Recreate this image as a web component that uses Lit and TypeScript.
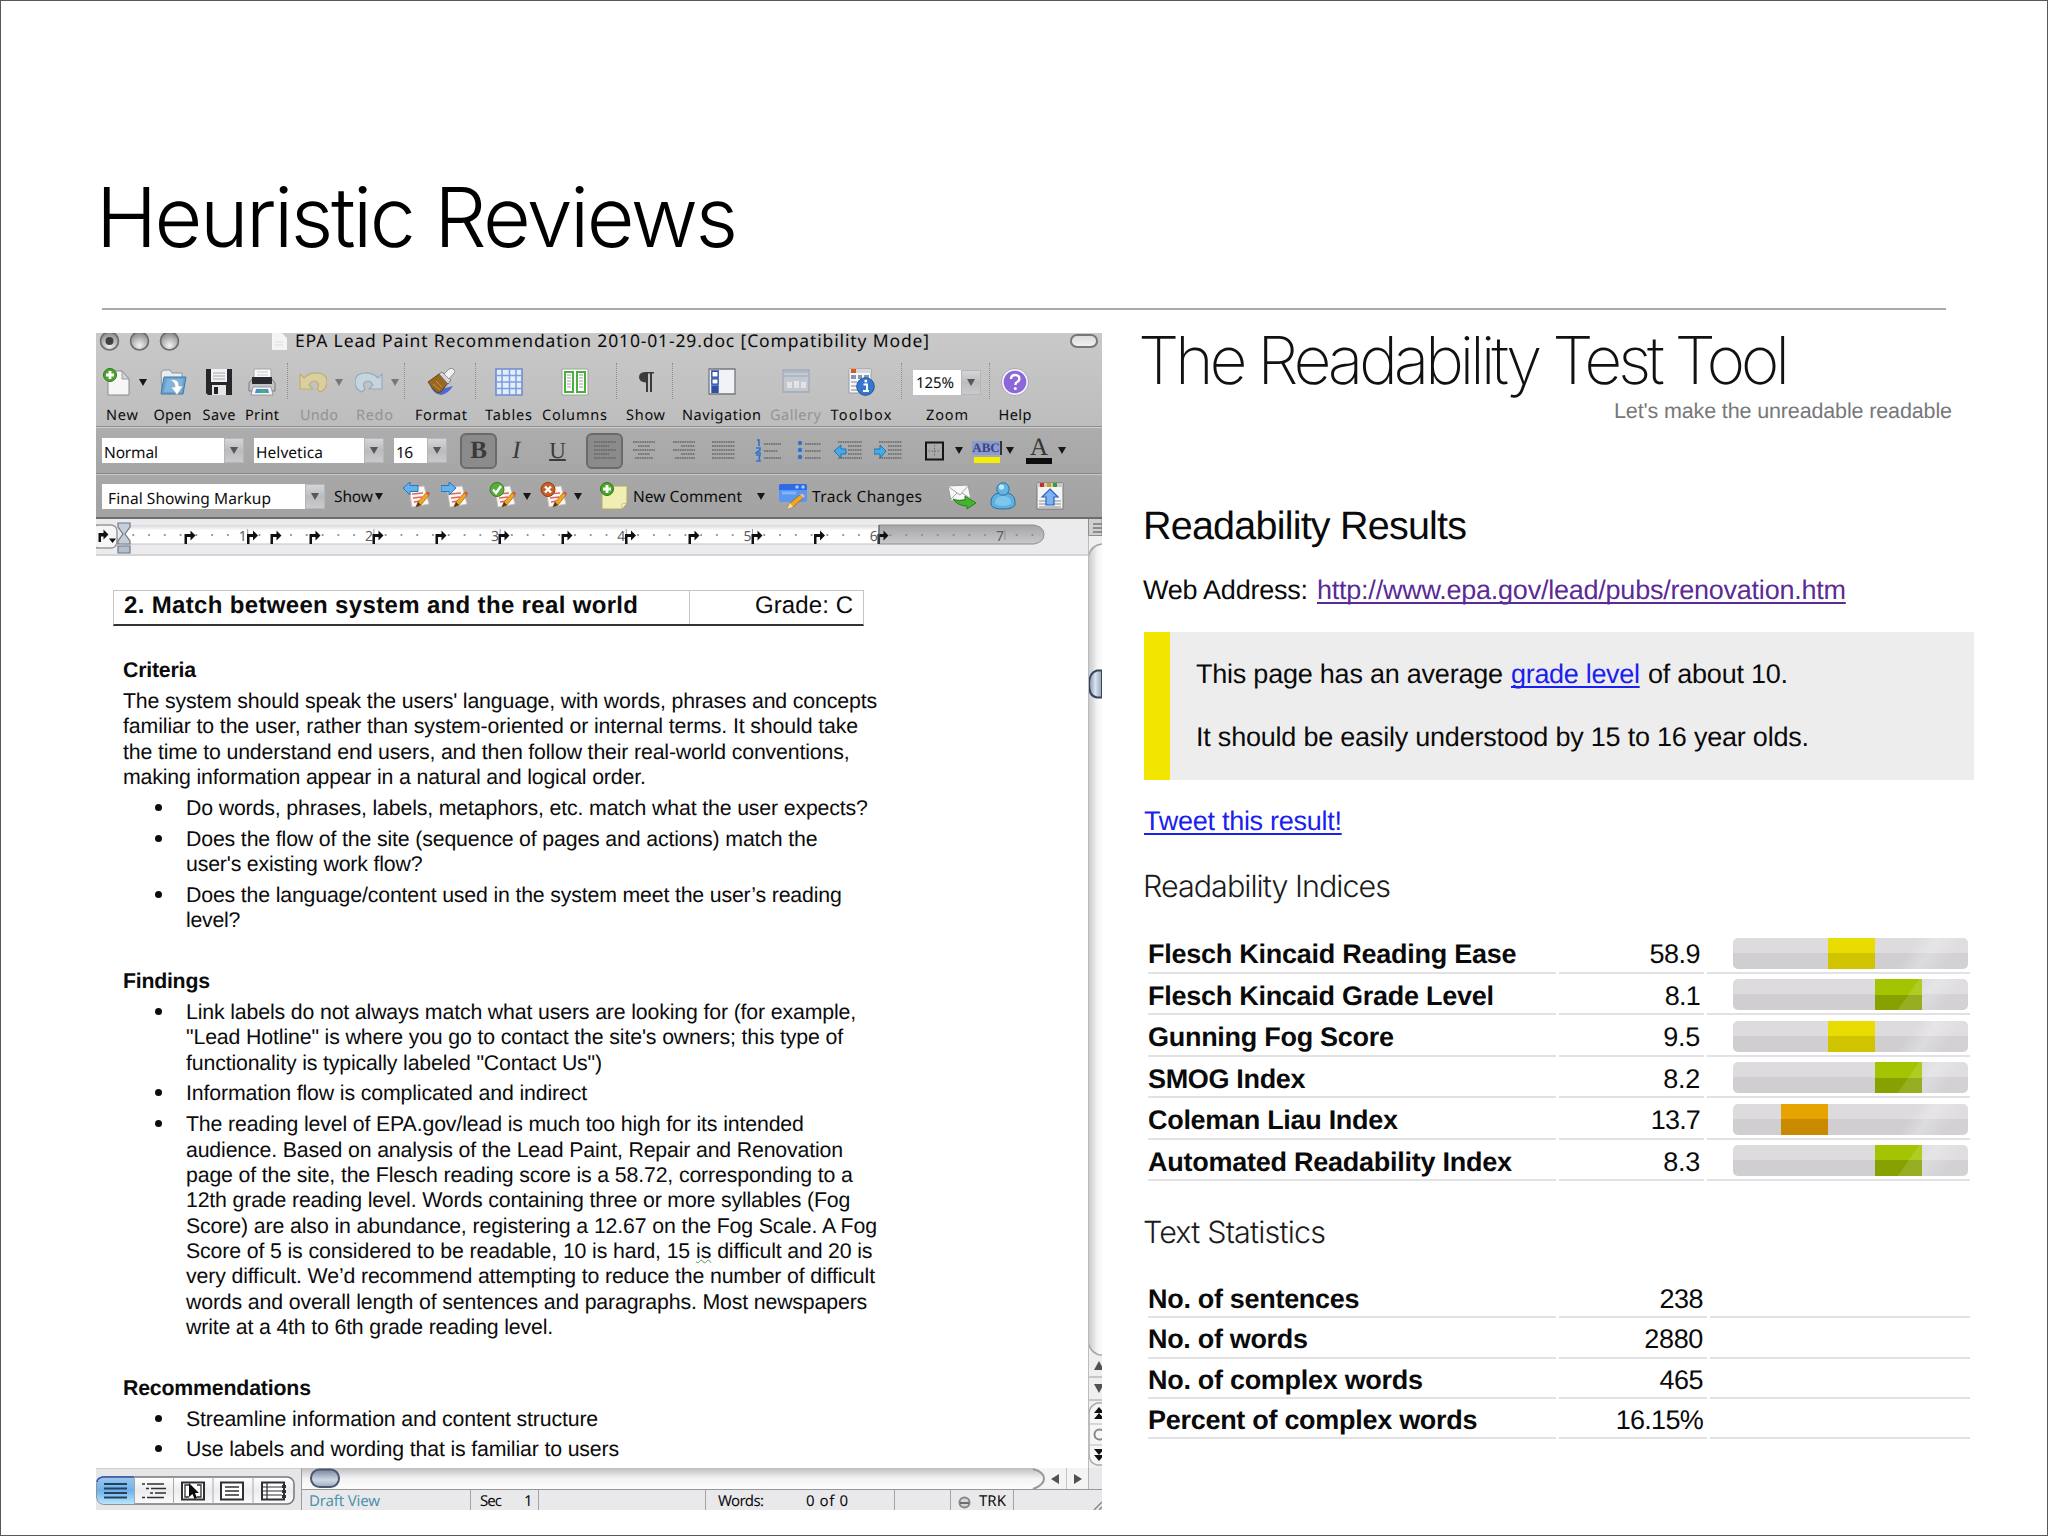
import { LitElement, html, css, svg, nothing, TemplateResult } from "lit";
import { customElement, property } from "lit/decorators.js";
import { classMap } from "lit/directives/class-map.js";

/** One line of text tracked out or in so that it fills a measure. */
@customElement("fit-text")
class FitText extends LitElement {
  @property() text = "";
  @property({ type: Number }) w = 0;
  static styles = css`
    :host { display: inline-block; white-space: pre; }
    .t { display: inline-block; text-decoration: inherit; }
  `;
  render() {
    return html`<span class="t">${this.text}</span>`;
  }
  firstUpdated() {
    const el = this.renderRoot.querySelector(".t") as HTMLElement;
    const natural = el.getBoundingClientRect().width;
    const n = this.text.length;
    if (n > 1 && this.w) {
      el.style.letterSpacing = `${(this.w - natural) / (n - 1)}px`;
      this.style.width = `${this.w}px`;
    }
  }
}

const fit = (text: string, w: number, cls = "") =>
  html`<fit-text class=${cls} .text=${text} .w=${w}></fit-text>`;

const caret = (cls = "") => html`<svg class="caret ${cls}" width="8" height="7" viewBox="0 0 8 7"><path d="M0 0h8L4 7z" fill="currentColor"/></svg>`;

const pencil = svg`<path d="M13 25l2-5 8-9 3 2-8 10z" fill="#f2a51e" stroke="#9c6410" stroke-width=".7"/><path d="M23 11l1.500-1.500q2 .300 2.500 2L26 13z" fill="#d9534a"/><path d="M13 25l2-5 3 3z" fill="#4a3a28"/>`;
const sheet = svg`<path d="M6 6l15-2 5 18-17 3z" fill="#fbf7f4" stroke="#c9c2bd" stroke-width=".8"/><path d="M9 12l11-1M10 16l9-1M11 20l6-1" stroke="#e2655d" stroke-width="1.600"/>`;
const plus = svg`<circle cx="7" cy="7" r="6.500" fill="#4aa52c" stroke="#2d7a17"/><path d="M7 3v8M3 7h8" stroke="#fff" stroke-width="2.800"/>`;

const icons: Record<string, TemplateResult> = {
  new: svg`<path d="M5 3h14l7 8v16H5z" fill="#f6f6f7" stroke="#8b8b8f"/><path d="M19 3v8h7z" fill="#d5d5d8" stroke="#8b8b8f" stroke-width=".8"/>${plus}`,
  open: svg`<path d="M2 4l3-2h6l2 3h10v20H3z" fill="#e9ecf0" stroke="#8e959e"/><path d="M5 9h22l-3 17H2z" fill="#6aa2cf" stroke="#3f78a6"/><path d="M8 11h16l-2 13H5z" fill="#8fc0e4" opacity=".6"/><path d="M11 12q9-2 9 6h4l-6 9-6-8h4q0-5-5-7z" fill="#fff" stroke="#8fa7b8" stroke-width=".7"/>`,
  save: svg`<path d="M1 1h26v26H3l-2-2z" fill="#26272b"/><path d="M6 1h16v13H6z" fill="#f1f1f3"/><path d="M8 5h12M8 8h12M8 11h12" stroke="#a5a5aa" stroke-width="1.200"/><path d="M7 17h14v10H7z" fill="#e4e5e7"/><path d="M9 19h4v7H9z" fill="#222"/>`,
  print: svg`<path d="M6 1h17v12H6z" fill="#fafafa" stroke="#a6a6a9"/><path d="M9 4h11M9 7h11" stroke="#c7c7ca"/><path d="M1 15l4-5h18l4 5v8H1z" fill="#c3c4c7" stroke="#77787b"/><path d="M4 9h20v7H4z" fill="#2a2b2e"/><path d="M5 19h18l2 8H3z" fill="#f4f4f4" stroke="#8b8b8f" stroke-width=".8"/><path d="M8 21h12l1 4H7z" fill="#3f94cc"/><path d="M14 21l6 4h-8z" fill="#4caf73"/>`,
  undo: svg`<path d="M1 6v15h13l-4-4q3-6 8-3 3 3 0 7l3 3q7-3 7-10 0-8-9-9-8-1-14 5z" fill="#dccf9f" stroke="#c0ab70" stroke-width="1.100"/>`,
  redo: svg`<path d="M27 6v15H14l4-4q-3-6-8-3-3 3 0 7l-3 3q-7-3-7-10 0-8 9-9 8-1 14 5z" fill="#c6d4de" stroke="#94a9bc" stroke-width="1.100"/>`,
  format: svg`<path d="M3 17q3 9 11 10 7-1 12-9l-8 2z" fill="#4d69dc"/><path d="M1 14l11-8 9 9-7 9q-4 2-7-2z" fill="#99671f" stroke="#5d4113" stroke-width=".9"/><path d="M6 16l7 6M9 13l6 6" stroke="#c69443"/><path d="M12 6l3-2 9 8-3 4z" fill="#d8d8db" stroke="#64646a" stroke-width=".8"/><path d="M17 6l5-5q5-2 6 3l-6 7z" fill="#f1f1f3" stroke="#85858b" stroke-width=".9"/>`,
  tables: svg`<path d="M1 1h26v26H1z" fill="#e3edfb" stroke="#6d8dd0" stroke-width="1.600"/><path d="M7 1v26M14.500 1v26M21 1v26M1 7.500h26M1 14h26M1 20.500h26" stroke="#7e9fdd" stroke-width="1.500"/>`,
  columns: svg`<path d="M1 1h26v26H1z" fill="#f8faf8" stroke="#9ea69e"/><path d="M4 4h8v20H4zM16 4h8v20h-8z" fill="#fff" stroke="#4cae3e" stroke-width="2"/><path d="M6 7h4M6 10h4M6 13h4M6 16h4M6 19h4M18 7h4M18 10h4M18 13h4M18 16h4M18 19h4" stroke="#9c9c9c"/>`,
  pilcrow: svg`<path d="M13 4h9v1.600h-2V24h-2V5.600h-2V24h-2V14.500q-7-.300-7-5.300T13 4z" fill="#3b3b3d"/>`,
  nav: svg`<path d="M1 1h26v25H1z" fill="#f1f2f5" stroke="#75777e" stroke-width="1.300"/><path d="M3 2h8v23H3z" fill="#5f7cc4"/><path d="M4 3.500h6v5.500H4zM4 11h6v5H4z" fill="#fff" stroke="#2d4c98"/><path d="M4 18h6v7H4z" fill="#2f509e"/>`,
  gallery: svg`<g opacity=".55"><path d="M1 2h26v22H1z" fill="#c5cedb" stroke="#8896ae" stroke-width="1.300"/><path d="M2 4h24M2 8h24" stroke="#93a5c5" stroke-width="1.500"/><path d="M5 14h5v6H5zM12 13h5v7h-5zM19 14h5v6h-5z" fill="#fff"/></g>`,
  toolbox: svg`<path d="M2 1h22v24H2z" fill="#f7f7f7" stroke="#9c9ca0"/><path d="M2 1h22v4H2z" fill="#d5d7dc"/><path d="M4 1h5v4H4z" fill="#dd5717"/><path d="M4 7h5v4H4zM11 7h4v4h-4zM17 7h5v4h-5z" fill="#8296ba"/><path d="M4 14h6M4 18h6M4 22h6" stroke="#7d8aa3"/><circle cx="18.500" cy="18.500" r="8.800" fill="#3577cc" stroke="#1f529c"/><path d="M16.500 16.500h3.500v6.500M16 23h6" stroke="#fff" stroke-width="2" fill="none"/><circle cx="18.800" cy="13" r="1.500" fill="#fff"/>`,
  help: svg`<circle cx="14" cy="14" r="12.500" fill="#8c67da" stroke="#f4f1fb" stroke-width="2.400"/><circle cx="14" cy="14" r="13.600" fill="none" stroke="#8c8c92" stroke-width=".7"/><path d="M10 11q0-4 4.200-4t4.200 3.500q0 2.300-2.400 3.500-1.600.8-1.600 3" fill="none" stroke="#fff" stroke-width="2.300"/><circle cx="14.300" cy="20.600" r="1.500" fill="#fff"/>`,
  alignL: svg`<path d="M3 5h22M3 9h15M3 13h22M3 17h15M3 21h22" class="ln"/>`,
  alignC: svg`<path d="M3 5h22M8 9h12M3 13h22M8 17h12M5 21h18" class="ln"/>`,
  alignR: svg`<path d="M3 5h22M11 9h14M3 13h22M11 17h14M5 21h20" class="ln"/>`,
  alignJ: svg`<path d="M3 5h23M3 9h23M3 13h23M3 17h23M3 21h23" class="ln"/>`,
  numbered: svg`<path d="M9 7h17M9 14h14M9 21h17" class="ln"/><path d="M2 3h2v6M1 11h4v2l-4 3h5M1 18h4l-1 3 1 3H1" stroke="#2f74cf" stroke-width="1.600" fill="none"/>`,
  bulleted: svg`<path d="M9 7h16M9 14h16M9 21h16" class="ln"/><circle cx="4" cy="6" r="2.200" fill="#2f74cf"/><circle cx="4" cy="13" r="2.200" fill="#2f74cf"/><circle cx="4" cy="20" r="2.200" fill="#2f74cf"/>`,
  outdent: svg`<path d="M4 5h24M14 9h14M14 13h14M14 17h14M4 21h24" class="ln"/><path d="M0 14l7-6v4h5v5H7v4z" fill="#45abe8" stroke="#176fae" stroke-width=".9"/>`,
  indent: svg`<path d="M5 5h23M14 9h14M14 13h14M14 17h14M5 21h23" class="ln"/><path d="M12 14L6 8v4H0v5h6v4z" fill="#45abe8" stroke="#176fae" stroke-width=".9"/>`,
  border: svg`<path d="M6 5.500h17v17H6z" fill="none" stroke="#151515" stroke-width="2"/><path d="M14.500 8v12M8.500 14h12" stroke="#6c6c6e" stroke-dasharray="1.500 1.500"/>`,
  prev: svg`${sheet}${pencil}<path d="M0 6l7-6v3.500h8v6H7V13z" fill="#62b3ee" stroke="#2a76b8"/>`,
  next: svg`${sheet}${pencil}<path d="M15 6L8 0v3.500H0v6h8V13z" fill="#62b3ee" stroke="#2a76b8"/>`,
  accept: svg`${sheet}${pencil}<circle cx="8" cy="7.500" r="7" fill="#59ad3a" stroke="#35801c"/><path d="M4 7.500l3 3.500 5-7" fill="none" stroke="#fff" stroke-width="2.400"/>`,
  reject: svg`${sheet}${pencil}<circle cx="8" cy="7.500" r="7" fill="#c8602b" stroke="#8e3c13"/><path d="M5 4.500l6 6M11 4.500l-6 6" stroke="#fff" stroke-width="2.400"/>`,
  note: svg`<path d="M2 4h25v17l-5 6H2z" fill="#f1eeb4" stroke="#b0aa6a"/><path d="M22 27v-5l5-1z" fill="#fbfae0" stroke="#b0aa6a" stroke-width=".7"/>${plus}`,
  track: svg`<rect x="0" y="2" width="28" height="18" rx="2.500" fill="#5a97f0"/><path d="M0 8V4q0-2 2-2h24q2 0 2 2v4z" fill="#2f6be6"/><circle cx="18" cy="5" r="1.700" fill="#a7ccff"/><circle cx="24" cy="5" r="1.700" fill="#a7ccff"/><path d="M3 11h14" stroke="#83b4f7" stroke-width="3"/><path d="M8 27l3-6 10-8 3 3-10 9z" fill="#f2a51e" stroke="#9c6410" stroke-width=".7"/><path d="M21 13l2-1.500 3 2.500-2 2z" fill="#e8b9ae"/><path d="M8 27l3-6 3 4z" fill="#f3deb4"/>`,
  mail: svg`<path d="M0 4l20-1 3 14-20 2z" fill="#f7f7f8" stroke="#9a9a9e"/><path d="M1 5l11 8 8-9M2 18l7-7M22 16l-8-5" fill="none" stroke="#a5a5aa"/><path d="M5 17q7 3 12 1v-4l11 7-9 6v-3q-9 0-14-7z" fill="#42b52c" stroke="#207a12" stroke-width=".9"/>`,
  person: svg`<path d="M2 23q-1-11 8-12h8q9 1 8 12-2 4-12 4T2 23z" fill="#5eb0df" stroke="#27719f"/><path d="M6 22q0-8 8-8t8 8q-8 4-16 0z" fill="#8dd0f2" opacity=".7"/><circle cx="14" cy="7" r="6.200" fill="#63b5e4" stroke="#27719f"/><circle cx="12.500" cy="5" r="2.600" fill="#c4e8fb"/>`,
  upload: svg`<path d="M1 1h26v26H1z" fill="#f4f4f5" stroke="#77777b"/><path d="M1 1h26v4H1z" fill="#c8c8cc"/><path d="M4 1h4v4H4z" fill="#c63127"/><path d="M11 1h4v4h-4z" fill="#d69a1c"/><path d="M17 1h4v4h-4z" fill="#3d9b35"/><path d="M3 19h22M3 22h22M3 25h22" stroke="#8c8c90"/><path d="M14 7l8 8h-4v8h-8v-8H6z" fill="#7db2f5" stroke="#2f63bb" stroke-width="1.200"/>`,
};

const icon = (name: string, cls = "") =>
  html`<svg class="ic ${cls}" width="28" height="28" viewBox="0 0 28 28">${icons[name]}</svg>`;

type Tool = { icon?: string; label?: string; w?: number; off?: boolean; arrow?: boolean; zoom?: boolean };
const tools: Tool[] = [
  { icon: "new", label: "New", w: 32, arrow: true },
  { icon: "open", label: "Open", w: 38 },
  { icon: "save", label: "Save", w: 33 },
  { icon: "print", label: "Print", w: 34 },
  {},
  { icon: "undo", label: "Undo", w: 38, off: true, arrow: true },
  { icon: "redo", label: "Redo", w: 37, off: true, arrow: true },
  {},
  { icon: "format", label: "Format", w: 52 },
  {},
  { icon: "tables", label: "Tables", w: 47 },
  { icon: "columns", label: "Columns", w: 65 },
  {},
  { icon: "pilcrow", label: "Show", w: 39 },
  {},
  { icon: "nav", label: "Navigation", w: 79 },
  { icon: "gallery", label: "Gallery", w: 51, off: true },
  { icon: "toolbox", label: "Toolbox", w: 61 },
  {},
  { zoom: true, label: "Zoom", w: 42 },
  {},
  { icon: "help", label: "Help", w: 33 },
];

const combo = (text: string, w: number, cls: string) => html`
  <div class="combo ${cls}"><span class="val">${fit(text, w)}</span><span class="drop">${caret()}</span></div>`;

const tabMark = (x: number) => svg`<path transform="translate(${x} 0)" d="M-3.500 31.500v-10h6v-3.500l5 5-5 5v-3.500h-3.500v7z" fill="#101012"/>`;

@customElement("word-window")
class WordWindow extends LitElement {
  static styles = css`
    :host { display: flex; flex-direction: column; width: 1006px; height: 1177px; color: #0c0c0c;
      font-family: "Noto Sans", "Liberation Sans", sans-serif; background: #fff; }
    * { box-sizing: border-box; }
    svg { display: block; flex: none; }
    .chrome { background: linear-gradient(#c9c9c9, #bdbdbd 93px); height: 93px; }
    .title { display: grid; grid-template-columns: 176px 23px 635px 138px 1fr; height: 26px; align-items: start; }
    .lights { display: flex; gap: 9px; padding-left: 3px; }
    .name { font-size: 17.500px; line-height: 16px; }
    .pill { width: 28px; height: 14px; border-radius: 8px; border: 2px solid #77777a; background: linear-gradient(#dcdcdc, #f0f0f0); justify-self: end; margin: 1px 4px 0 0; }
    .tools { display: grid; height: 67px; padding-left: 2px;
      grid-template-columns: 48px 53px 40px 46px 4px 60px 51px 9px 64px 4px 63px 69px 15px 43px 11px 87px 61px 70px 10px 82px 3px 48px; }
    .tool { display: flex; flex-direction: column; align-items: center; padding-top: 9px; }
    .pic { display: flex; align-items: center; height: 28px; gap: 10px; }
    .pic.ar { margin-left: 6px; gap: 8px; }
    .tool.off .pic.ar { margin-left: 4px; }
    .label { font-size: 14.500px; line-height: 20px; margin-top: 8.500px; white-space: nowrap; }
    .off .label { color: #939395; }
    .off .caret { color: #77777a; }
    .dots { width: 0; height: 36px; border-left: 1.500px dotted #8d8d90; justify-self: center; margin-top: 4px; }
    .caret { color: #171717; }
    .bar { display: grid; align-items: center; font-size: 15.500px; line-height: 22px; }
    .fmt { height: 47px; background: linear-gradient(#adadad, #a6a6a6); border-top: 1px solid #8f8f8f; box-shadow: inset 0 1px #cfcfcf;
      grid-template-columns: 142px 10px 130px 10px 53px 13px 37px 39px 43px 7px 37px 41px 40px 37px 55px 32px 40px 40px 12px 35px 13px 38px 14px 38px 14px; padding: 1px 0 0 6px; }
    .rev { height: 46px; background: linear-gradient(#a8a8a8, #a2a2a2); border-top: 1px solid #898989; box-shadow: inset 0 1px #c9c9c9; border-bottom: 2px solid #6c6c6c;
      grid-template-columns: 223px 9px 50px 19px 38px 48px 34px 17px 34px 26px 33px 109px 37px 33px 136px 41px 47px 28px; padding: 1px 0 0 6px; }
    .combo { display: flex; height: 25px; background: #fff; }
    .val { flex: 1; padding: 3px 0 0 2px; }
    .zoomed .val { padding: 3px 0 0 3px; font-size: 15px; line-height: 20px; }
    .rev .val { padding-left: 6px; }
    .drop { width: 20px; background: linear-gradient(#d6d6d8, #bcbcbe 50%, #cacacc); display: grid; place-items: center; border: 1px solid #b6b6b8; }
    .drop .caret { color: #55565a; }
    .zoomed { width: 68px; height: 25px; }
    .btn { width: 37px; height: 36px; border-radius: 6px; display: grid; place-items: center; }
    .on { background: #8b8b8c; border: 2px solid #6a6a6b; }
    .ltr { font-family: "Liberation Serif", serif; font-size: 25px; line-height: 30px; color: #3a3a3b; text-align: center; }
    .b { font-weight: bold; }
    .i { font-style: italic; }
    .u { text-decoration: underline; text-decoration-thickness: 1.500px; font-size: 23px; }
    .ln { stroke: #68686a; stroke-width: 1.700; stroke-dasharray: 1.700 .6; fill: none; }
    .mid { justify-self: center; }
    .abc { display: flex; flex-direction: column; align-items: center; margin-top: 2px; }
    .hl { font-family: "Liberation Serif", serif; font-size: 13px; line-height: 14px; color: #39457f; background: #8c9bd0; font-weight: bold; border-right: 2px solid #333; }
    .yel { width: 26px; height: 6px; background: #f5ee08; margin-top: 2px; }
    .big { font-family: "Liberation Serif", serif; font-size: 25px; line-height: 18px; color: #333; }
    .blk { width: 26px; height: 6px; background: #0c0c0c; margin-top: 1px; }
    .flow { display: flex; align-items: center; gap: 2px; }
    .body { display: grid; grid-template-columns: 992px 14px; grid-template-rows: 37px 912px; }
    .ruler { background: #ebeaec; border-bottom: 2px solid #d5d4d6; }
    .side { grid-column: 2; grid-row: 1 / 3; }
    .doc { grid-column: 1; grid-row: 2; background: #fff; font-family: "Liberation Sans", Arial, sans-serif; font-size: 21.300px; line-height: 25.330px; color: #0b0b0b; overflow: hidden; }
    .head { display: grid; grid-template-columns: 576px 1fr; width: 751px; height: 36px; margin: 33.500px 0 0 17px; border: 1px solid #c5c5c5; border-bottom: 2px solid #333; font-size: 24px; line-height: 29.500px; }
    .head > :first-child { font-weight: bold; padding-left: 10px; border-right: 1px solid #c5c5c5; }
    .head > :last-child { padding-left: 65px; }
    .sec { font-weight: bold; margin: 35.500px 0 0 27px; height: 25.330px; }
    .crit { margin-top: 32.500px; }
    .para { margin: 5.800px 0 0 27px; }
    .line { height: 25.330px; white-space: nowrap; }
    .li { display: grid; grid-template-columns: 31px 1fr; margin: 5.500px 0 0 59px; }
    .dot { width: 7px; height: 7px; border-radius: 50%; background: #0c0c0c; margin-top: 8px; }
    .wavy { text-decoration: underline wavy #4c9a4c 1.200px; text-underline-offset: 1px; text-decoration-skip-ink: none; }
    .foot { display: grid; grid-template-columns: 206px 1fr; height: 42px; }
    .views { background: #e6e5e8; padding: 7px 0 0 0; border-top: 1px solid #cfced1; border-right: 1px solid #9c9b9e; }
    .right { display: grid; grid-template-rows: 21px 21px; }
    .stat { display: grid; grid-template-columns: 169px 68px 167px 189px 56px 63px 1fr; background: #e9e9ec; border-top: 1px solid #97979a; font-size: 15px; line-height: 21px; height: 21px; }
    .stat > * { border-right: 1px solid #a3a3a6; white-space: nowrap; padding-top: 1px; height: 20px; display: flex; align-items: flex-start; }
    .stat > :last-child { border: 0; justify-content: flex-end; }
    .c1 { color: #4e92ab; padding-left: 7px; }
    .c2 { padding-left: 9px; gap: 22px; }
    .c4 { padding-left: 12px; gap: 42px; }
    .c6 { padding-left: 7px; gap: 8px; }
    .c6 svg { margin-top: 5px; }
  `;

  private toolCell(t: Tool) {
    if (!t.label) return html`<div class="dots"></div>`;
    return html`<div class=${classMap({ tool: true, off: !!t.off })}>
      <div class=${classMap({ pic: true, ar: !!t.arrow })}>
        ${t.zoom ? html`<div class="zoomed">${combo("125%", 38, "")}</div>` : icon(t.icon!)}
        ${t.arrow ? caret() : nothing}
      </div>
      <div class="label">${fit(t.label, t.w!)}</div>
    </div>`;
  }

  private light(dot: boolean) {
    return html`<svg width="21" height="20" viewBox="0 0 21 20"><defs><radialGradient id="g" cx=".5" cy=".75" r=".7"><stop offset="0" stop-color="#f2f2f2"/><stop offset="1" stop-color="#8a8a8c"/></radialGradient></defs>
      <circle cx="10.500" cy="8" r="9" fill="url(#g)" stroke="#6b6b6e" stroke-width="1.600"/>${dot ? svg`<circle cx="10.500" cy="8" r="4" fill="#3f4043"/>` : nothing}</svg>`;
  }

  private ruler() {
    const unit = 126.2;
    const zero = 21.5;
    const dots = [];
    for (let i = 1; i < 59; i++) {
      const x = zero + (i * unit) / 8;
      if (i % 8 && x < 940) dots.push(x);
    }
    const marks = [94, 156.5, 180, 219, 282, 345, 408, 471, 534.5, 598, 661, 723.5, 787];
    return svg`<svg width="992" height="35" viewBox="0 0 992 35">
      <defs><linearGradient id="r" x2="0" y2="1"><stop offset="0" stop-color="#d9d9db"/><stop offset=".3" stop-color="#fff"/><stop offset="1" stop-color="#fff"/></linearGradient>
      <linearGradient id="q" x2="0" y2="1"><stop offset="0" stop-color="#a5a5a8"/><stop offset="1" stop-color="#c9c9cb"/></linearGradient></defs>
      <rect x="28" y="6" width="756" height="19" fill="url(#r)"/>
      <path d="M783 6h155q10 2 10 9.500T938 25H783z" fill="url(#q)" stroke="#8d8d90"/>
      <path d="M28 25h756" stroke="#c3c3c6"/>
      <rect x="-4" y="6" width="25" height="23" rx="6" fill="#f6f6f7" stroke="#98989b" stroke-width="1.500"/>
      <path d="M2.500 23v-9h5v-3.500l5 5-5 5V17.500H5V23zM13 19.500h7l-3.500 4.500z" fill="#111"/>
      ${dots.map((x) => svg`<circle cx=${x} cy="16" r="1.100" fill="#8b8b8e"/>`)}
      ${[1, 2, 3, 4, 5, 6, 7].map((n) => svg`<text x=${n * unit + zero - 1} y="21.500" font-size="14" text-anchor="middle" fill="#5f5f62">${n}</text><path d="M${n * unit + zero + 4} 10v11" stroke="#98989b"/>`)}
      ${marks.map((x) => svg`<g transform="translate(-2 -6.500)">${tabMark(x)}</g>`)}
      <path d="M22 4h12v4l-5 7 5 7v3H22v-3l5-7-5-7z" fill="#c6ced9" stroke="#6d7784" stroke-width="1.200"/>
      <path d="M22 27h12v7H22z" fill="#b4bfcc" stroke="#6d7784" stroke-width="1.200"/>
      <path d="M783 6v19" stroke="#55606c"/>
    </svg>`;
  }

  private side() {
    return svg`<svg width="14" height="949" viewBox="0 0 14 949">
      <defs><linearGradient id="t"><stop offset="0" stop-color="#c6c5c8"/><stop offset=".7" stop-color="#f6f6f7"/><stop offset="1" stop-color="#fbfbfb"/></linearGradient>
      <linearGradient id="k"><stop offset="0" stop-color="#8094b0"/><stop offset=".5" stop-color="#dbe3ee"/><stop offset="1" stop-color="#8ea1ba"/></linearGradient></defs>
      <path d="M0 0h14v949H0z" fill="#efeff0"/>
      <path d="M.5 0v16.500H14V0" fill="#cfcfd1" stroke="#8d8d90"/><path d="M5 5h9M5 9h9M5 13h9" stroke="#77777a" stroke-width="1.500"/>
      <path d="M0 38q3-12 14-13v811q-10-1-14-12z" fill="url(#t)"/>
      <path d="M0 38q3-12 14-13M0 824q4 12 14 12" fill="none" stroke="#a5a5a8" stroke-width="1.500"/>
      <path d="M14 151.500H9q-8 2-8 14t8 13h5z" fill="url(#k)" stroke="#37455c" stroke-width="2"/>
      <path d="M6 851l5-9 5 9zM6 865l5 9 5-9z" fill="#525255"/>
      <path d="M0 858h14M0 881h14M0 905h14M0 926h14" stroke="#b9b9bc" stroke-width="1.500"/>
      <path d="M14 884H9q-8 3-8 11v40q0 9 8 11h5" fill="#f6f6f7" stroke="#aaaaad" stroke-width="1.500"/>
      <path d="M0 905h14M0 926h14" stroke="#b9b9bc"/>
      <path d="M6 894l5-6 5 6zM6 900l5-6 5 6zM6 930l5 6 5-6zM6 936l5 6 5-6z" fill="#101010"/>
      <circle cx="11.500" cy="915.500" r="5" fill="none" stroke="#88888b" stroke-width="2"/>
      <path d="M.5 17v932" stroke="#bcbcbf"/>
    </svg>`;
  }

  private views() {
    const s = "#2f3033";
    return svg`<svg width="202" height="31" viewBox="0 0 202 31">
      <defs><linearGradient id="v" x2="0" y2="1"><stop offset="0" stop-color="#fff"/><stop offset=".5" stop-color="#ececee"/><stop offset="1" stop-color="#fbfbfb"/></linearGradient>
      <linearGradient id="w" x2="0" y2="1"><stop offset="0" stop-color="#9cc7ee"/><stop offset=".5" stop-color="#6cb2ea"/><stop offset="1" stop-color="#b8e6fc"/></linearGradient></defs>
      <rect x="1" y="1" width="197" height="27" rx="7" fill="url(#v)" stroke="#77777a" stroke-width="1.500"/>
      <path d="M38 1H7Q1 2 1 8v13q0 6 6 7h31z" fill="url(#w)"/><path d="M38 1H7Q1 2 1 6" fill="none" stroke="#3550a5" stroke-width="1.500"/>
      <path d="M38.500 1v27M77.500 1v27M117 1v27M157 1v27" stroke="#a9a9ac"/>
      <path d="M8 8h23M8 12.500h23M8 17h23M8 21.500h23" stroke="#26415f" stroke-width="1.800"/>
      <path d="M46 8h3M51 8h17M50 12.500h3M55 12.500h15M54 17h3M59 17h11M46 21.500h3M51 21.500h17" stroke=${s} stroke-width="1.500"/>
      <path d="M86 6.500h22v17H86z" fill="#fff" stroke=${s} stroke-width="2"/><path d="M93 9h-4v12h4M101 9h4v12h-4" stroke=${s} fill="none" stroke-width="1.300"/><path d="M93 7v14l3.500-3 2 5 2.500-1-2-5h4z" fill="#0d0d0d"/>
      <path d="M125 6.500h22v17h-22z" fill="#fff" stroke=${s} stroke-width="2"/><path d="M129 11h14M129 15h14M129 19h14" stroke=${s} stroke-width="1.400"/>
      <path d="M166 6.500h22v17h-22z" fill="#fff" stroke=${s} stroke-width="2"/><path d="M171 6v17M166 11h20M166 15h20M166 19h20" stroke=${s} stroke-width="1.200"/><path d="M188 9v3M188 14v3M188 19v3" stroke=${s} stroke-width="4"/>
    </svg>`;
  }

  private hscroll() {
    return svg`<svg width="800" height="21" viewBox="0 0 800 21">
      <defs><linearGradient id="h" x2="0" y2="1"><stop offset="0" stop-color="#bfbec1"/><stop offset=".5" stop-color="#f3f3f4"/><stop offset="1" stop-color="#fdfdfd"/></linearGradient>
      <linearGradient id="hk" x2="0" y2="1"><stop offset="0" stop-color="#76849a"/><stop offset=".6" stop-color="#cfdae8"/><stop offset="1" stop-color="#9babc0"/></linearGradient></defs>
      <path d="M0 0h800v21H0z" fill="#f4f4f5"/><path d="M0 0h730q12 3 12 10.500T730 21H0z" fill="url(#h)"/>
      <path d="M731 1q11 3 11 9.500T731 21" fill="none" stroke="#98989b" stroke-width="2"/>
      <path d="M764.500 0v21" stroke="#c4c4c7"/><path d="M786.500 0v21" stroke="#b4b4b7"/><path d="M787 0h13v21h-13z" fill="#e8e8ea"/>
      <path d="M757 6v10l-8-5zM772 6v10l8-5z" fill="#525255"/>
      <rect x="9" y="1.500" width="28" height="17.500" rx="8.500" fill="url(#hk)" stroke="#4c596d" stroke-width="2"/>
    </svg>`;
  }

  private lines(rows: [string, number][], left: number) {
    return rows.map(([s, end]) => html`<div class="line">${fit(s, end * 1.3061 - left)}</div>`);
  }

  private li(rows: [string, number][]) {
    return html`<div class="li"><span class="dot"></span><div>${this.lines(rows, 186)}</div></div>`;
  }

  render() {
    return html`
      <div class="chrome">
        <div class="title">
          <div class="lights">${this.light(true)}${this.light(false)}${this.light(false)}</div>
          <svg width="15" height="17" viewBox="0 0 15 17"><path d="M0 0h10l5 5v12H0z" fill="#f4f4f4"/><path d="M3 9h8M3 12h8" stroke="#ddd"/></svg>
          <div class="name">${fit("EPA Lead Paint Recommendation 2010-01-29.doc [Compatibility Mode]", 634)}</div>
          <div></div>
          <div class="pill"></div>
        </div>
        <div class="tools">${tools.map((t) => this.toolCell(t))}</div>
      </div>
      <div class="bar fmt">
        ${combo("Normal", 54, "")}<i></i>${combo("Helvetica", 67, "")}<i></i>${combo("16", 17, "")}<i></i>
        <div class="btn on ltr b">B</div>
        <div class="ltr i">I</div>
        <div class="ltr u">U</div>
        <i></i>
        <div class="btn on">${icon("alignL")}</div>
        <div class="mid">${icon("alignC")}</div>
        <div class="mid">${icon("alignR")}</div>
        <div class="mid">${icon("alignJ")}</div>
        <div class="mid">${icon("numbered")}</div>
        ${icon("bulleted")}
        <div class="mid">${icon("outdent")}</div>
        <div class="mid">${icon("indent")}</div>
        <i></i>
        ${icon("border")}${caret()}
        <div class="abc mid"><span class="hl">ABC</span><span class="yel"></span></div>${caret()}
        <div class="abc mid"><span class="big">A</span><span class="blk"></span></div>${caret()}
      </div>
      <div class="bar rev">
        ${combo("Final Showing Markup", 163, "")}<i></i>
        <div class="flow">${fit("Show", 39)}${caret()}</div><i></i>
        ${icon("prev")}${icon("next")}${icon("accept")}${caret()}${icon("reject")}${caret()}
        ${icon("note")}${fit("New Comment", 109)}<div class="mid">${caret()}</div>
        ${icon("track")}${fit("Track Changes", 110)}
        ${icon("mail")}${icon("person")}${icon("upload")}
      </div>
      <div class="body">
        <div class="ruler">${this.ruler()}</div>
        <div class="side">${this.side()}</div>
        <div class="doc">
          <div class="head"><div>${fit("2. Match between system and the real world", 514)}</div><div>${fit("Grade: C", 98)}</div></div>
          <div class="sec crit">${fit("Criteria", 73)}</div>
          <div class="para">${this.lines([
            ["The system should speak the users' language, with words, phrases and concepts", 671.5],
            ["familiar to the user, rather than system-oriented or internal terms. It should take", 657],
            ["the time to understand end users, and then follow their real-world conventions,", 650.5],
            ["making information appear in a natural and logical order.", 494.5],
          ], 123)}</div>
          ${this.li([["Do words, phrases, labels, metaphors, etc. match what the user expects?", 664.5]])}
          ${this.li([["Does the flow of the site (sequence of pages and actions) match the", 626], ["user's existing work flow?", 323.5]])}
          ${this.li([["Does the language/content used in the system meet the user’s reading", 644.5], ["level?", 184]])}
          <div class="sec">${fit("Findings", 87)}</div>
          ${this.li([
            ["Link labels do not always match what users are looking for (for example,", 655.5],
            ["\"Lead Hotline\" is where you go to contact the site's owners; this type of", 645.5],
            ["functionality is typically labeled \"Contact Us\")", 461],
          ])}
          ${this.li([["Information flow is complicated and indirect", 449.5]])}
          <div class="li"><span class="dot"></span><div>
            ${this.lines([
              ["The reading level of EPA.gov/lead is much too high for its intended", 615.5],
              ["audience. Based on analysis of the Lead Paint, Repair and Renovation", 645.5],
              ["page of the site, the Flesch reading score is a 58.72, corresponding to a", 653],
              ["12th grade reading level. Words containing three or more syllables (Fog", 651],
              ["Score) are also in abundance, registering a 12.67 on the Fog Scale. A Fog", 671.5],
            ], 186)}
            <div class="line">${fit("Score of 5 is considered to be readable, 10 is hard, 15 ", 510)}<span class="wavy">is</span>${fit(" difficult and 20 is", 161)}</div>
            ${this.lines([
              ["very difficult. We’d recommend attempting to reduce the number of difficult", 670],
              ["words and overall length of sentences and paragraphs. Most newspapers", 664],
              ["write at a 4th to 6th grade reading level.", 423.5],
            ], 186)}
          </div></div>
          <div class="sec">${fit("Recommendations", 188)}</div>
          ${this.li([["Streamline information and content structure", 458]])}
          ${this.li([["Use labels and wording that is familiar to users", 474]])}
        </div>
      </div>
      <div class="foot">
        <div class="views">${this.views()}</div>
        <div class="right">
          ${this.hscroll()}
          <div class="stat">
            <div class="c1">${fit("Draft View", 71)}</div>
            <div class="c2">${fit("Sec", 22)}<span>1</span></div>
            <div></div>
            <div class="c4">${fit("Words:", 46)}${fit("0 of 0", 42)}</div>
            <div></div>
            <div class="c6"><svg width="13" height="13" viewBox="0 0 13 13"><circle cx="6.500" cy="6.500" r="5" fill="#d8d8da" stroke="#85858a" stroke-width="2"/><path d="M2 7h9" stroke="#6c6c70" stroke-width="2"/></svg>${fit("TRK", 27)}</div>
            <div><svg width="14" height="19" viewBox="0 0 14 19"><path d="M14 11l-8 8M14 16l-3 3" stroke="#8a8a8d" stroke-width="1.500"/></svg></div>
          </div>
        </div>
      </div>`;
  }
}

type Index = { name: string; w: number; value: string; vw: number; level: number; tone: string };
const indices: Index[] = [
  { name: "Flesch Kincaid Reading Ease", w: 368.5, value: "58.9", vw: 51, level: 2, tone: "yellow" },
  { name: "Flesch Kincaid Grade Level", w: 346, value: "8.1", vw: 36, level: 3, tone: "green" },
  { name: "Gunning Fog Score", w: 246, value: "9.5", vw: 37, level: 2, tone: "yellow" },
  { name: "SMOG Index", w: 157.5, value: "8.2", vw: 37, level: 3, tone: "green" },
  { name: "Coleman Liau Index", w: 250, value: "13.7", vw: 50, level: 1, tone: "orange" },
  { name: "Automated Readability Index", w: 364, value: "8.3", vw: 37, level: 3, tone: "green" },
];
const stats = [
  { name: "No. of sentences", w: 211.5, value: "238", vw: 44 },
  { name: "No. of words", w: 160, value: "2880", vw: 59 },
  { name: "No. of complex words", w: 275, value: "465", vw: 44 },
  { name: "Percent of complex words", w: 329.5, value: "16.15%", vw: 88 },
];

@customElement("readability-report")
class ReadabilityReport extends LitElement {
  static styles = css`
    :host { display: block; width: 832px; font-family: "Liberation Sans", Arial, sans-serif; color: #0a0a0a; font-size: 27px; line-height: 32px; }
    * { box-sizing: border-box; }
    .h1 { font-family: Inter, sans-serif; font-weight: 200; font-size: 66px; line-height: 54px; height: 53px; margin-left: -5px; color: #111; white-space: nowrap; }
    .tag { font-size: 21.500px; line-height: 26px; height: 26px; color: #77777a; margin-top: 12px; padding-left: 471px; }
    .h2 { font-size: 39.500px; line-height: 48px; height: 48px; margin-top: 78px; }
    .addr { display: flex; gap: 9px; margin-top: 23.500px; height: 32px; }
    .link { color: #1a20ee; text-decoration: underline; text-decoration-thickness: 2px; text-underline-offset: 3px; text-decoration-skip-ink: none; }
    .seen { color: #5b2a96; }
    .quote { margin: 26.500px 0 0 1px; width: 830px; height: 148px; border-left: 26px solid #f2e500; background: #eeedee; padding: 11px 0 0 26px; line-height: 62.700px; }
    .row1 { display: flex; gap: 8px; height: 62.700px; }
    .tweet { margin: 25px 0 0 1px; height: 32px; }
    .h3 { font-family: Inter, sans-serif; font-weight: 300; font-size: 30.500px; line-height: 40px; height: 40px; color: #1b1b1b; }
    .indices { margin-top: 29.500px; }
    .statistics { margin-top: 32px; }
    .tbl { display: grid; grid-template-columns: 408px 145px 263px; column-gap: 3px; margin: 25.500px 0 0 5px; grid-auto-rows: 41.500px; }
    .tbl.small { grid-auto-rows: 40.300px; grid-template-columns: 408px 148px 260px; margin-top: 25px; }
    .tbl > * { border-bottom: 2px solid #e2e1e4; }
    .k { font-weight: bold; padding-top: 6px; }
    .v { text-align: right; padding: 6px 4px 0 0; }
    .small .k, .small .v { padding-top: 5px; }
    .m { padding: 5.500px 0 0 26px; }
    .meter { display: grid; grid-template-columns: 48px 47px 47px 47px 46px; width: 235px; height: 31px; border-radius: 5px; overflow: hidden; background: linear-gradient(125deg, #fff0 72%, #ffffff44 80%, #ffffff11 90%), linear-gradient(#dddbde 50%, #d0ced1 50%); }
    .yellow { background: linear-gradient(#e8dc00 50%, #d0c300 50%); }
    .green { background: linear-gradient(125deg, #fff0 64%, #ffffff22 65%), linear-gradient(#a3c400 50%, #86a100 50%); }
    .orange { background: linear-gradient(#e7a300 50%, #ca8a00 50%); }
  `;
  render() {
    return html`
      <div class="h1">${fit("The Readability Test Tool", 652)}</div>
      <div class="tag">${fit("Let's make the unreadable readable", 338)}</div>
      <div class="h2">${fit("Readability Results", 324)}</div>
      <div class="addr">${fit("Web Address:", 165)}${fit("http://www.epa.gov/lead/pubs/renovation.htm", 529, "link seen")}</div>
      <div class="quote">
        <div class="row1">${fit("This page has an average", 307)}${fit("grade level", 129, "link")}${fit("of about 10.", 140)}</div>
        ${fit("It should be easily understood by 15 to 16 year olds.", 613)}
      </div>
      <div class="tweet">${fit("Tweet this result!", 198, "link")}</div>
      <div class="h3 indices">${fit("Readability Indices", 248)}</div>
      <div class="tbl">
        ${indices.map((r) => html`
          <div class="k">${fit(r.name, r.w)}</div>
          <div class="v">${fit(r.value, r.vw)}</div>
          <div class="m"><div class="meter">${[0, 1, 2, 3, 4].map((i) => html`<span class=${i === r.level ? r.tone : ""}></span>`)}</div></div>`)}
      </div>
      <div class="h3 statistics">${fit("Text Statistics", 183)}</div>
      <div class="tbl small">
        ${stats.map((r) => html`<div class="k">${fit(r.name, r.w)}</div><div class="v">${fit(r.value, r.vw)}</div><div></div>`)}
      </div>`;
  }
}

@customElement("app-root")
class AppRoot extends LitElement {
  static styles = css`
    :host { display: block; width: 2048px; height: 1536px; background: #fff; box-shadow: inset 0 0 0 1px #58585a; overflow: hidden; text-rendering: geometricPrecision; }
    .title { font-family: Inter, sans-serif; font-weight: 300; font-size: 82.500px; line-height: 100px; height: 266px; padding: 166.500px 0 0 96px; box-sizing: border-box; color: #000; white-space: nowrap; }
    .rule { height: 2px; background: #a9a9a9; margin: 42px 102px 0; }
    .cols { display: flex; gap: 41px; padding: 23px 0 0 96px; }
  `;
  render() {
    return html`
      <div class="title">${fit("Heuristic Reviews", 642)}</div>
      <div class="rule"></div>
      <div class="cols"><word-window></word-window><readability-report></readability-report></div>`;
  }
}
